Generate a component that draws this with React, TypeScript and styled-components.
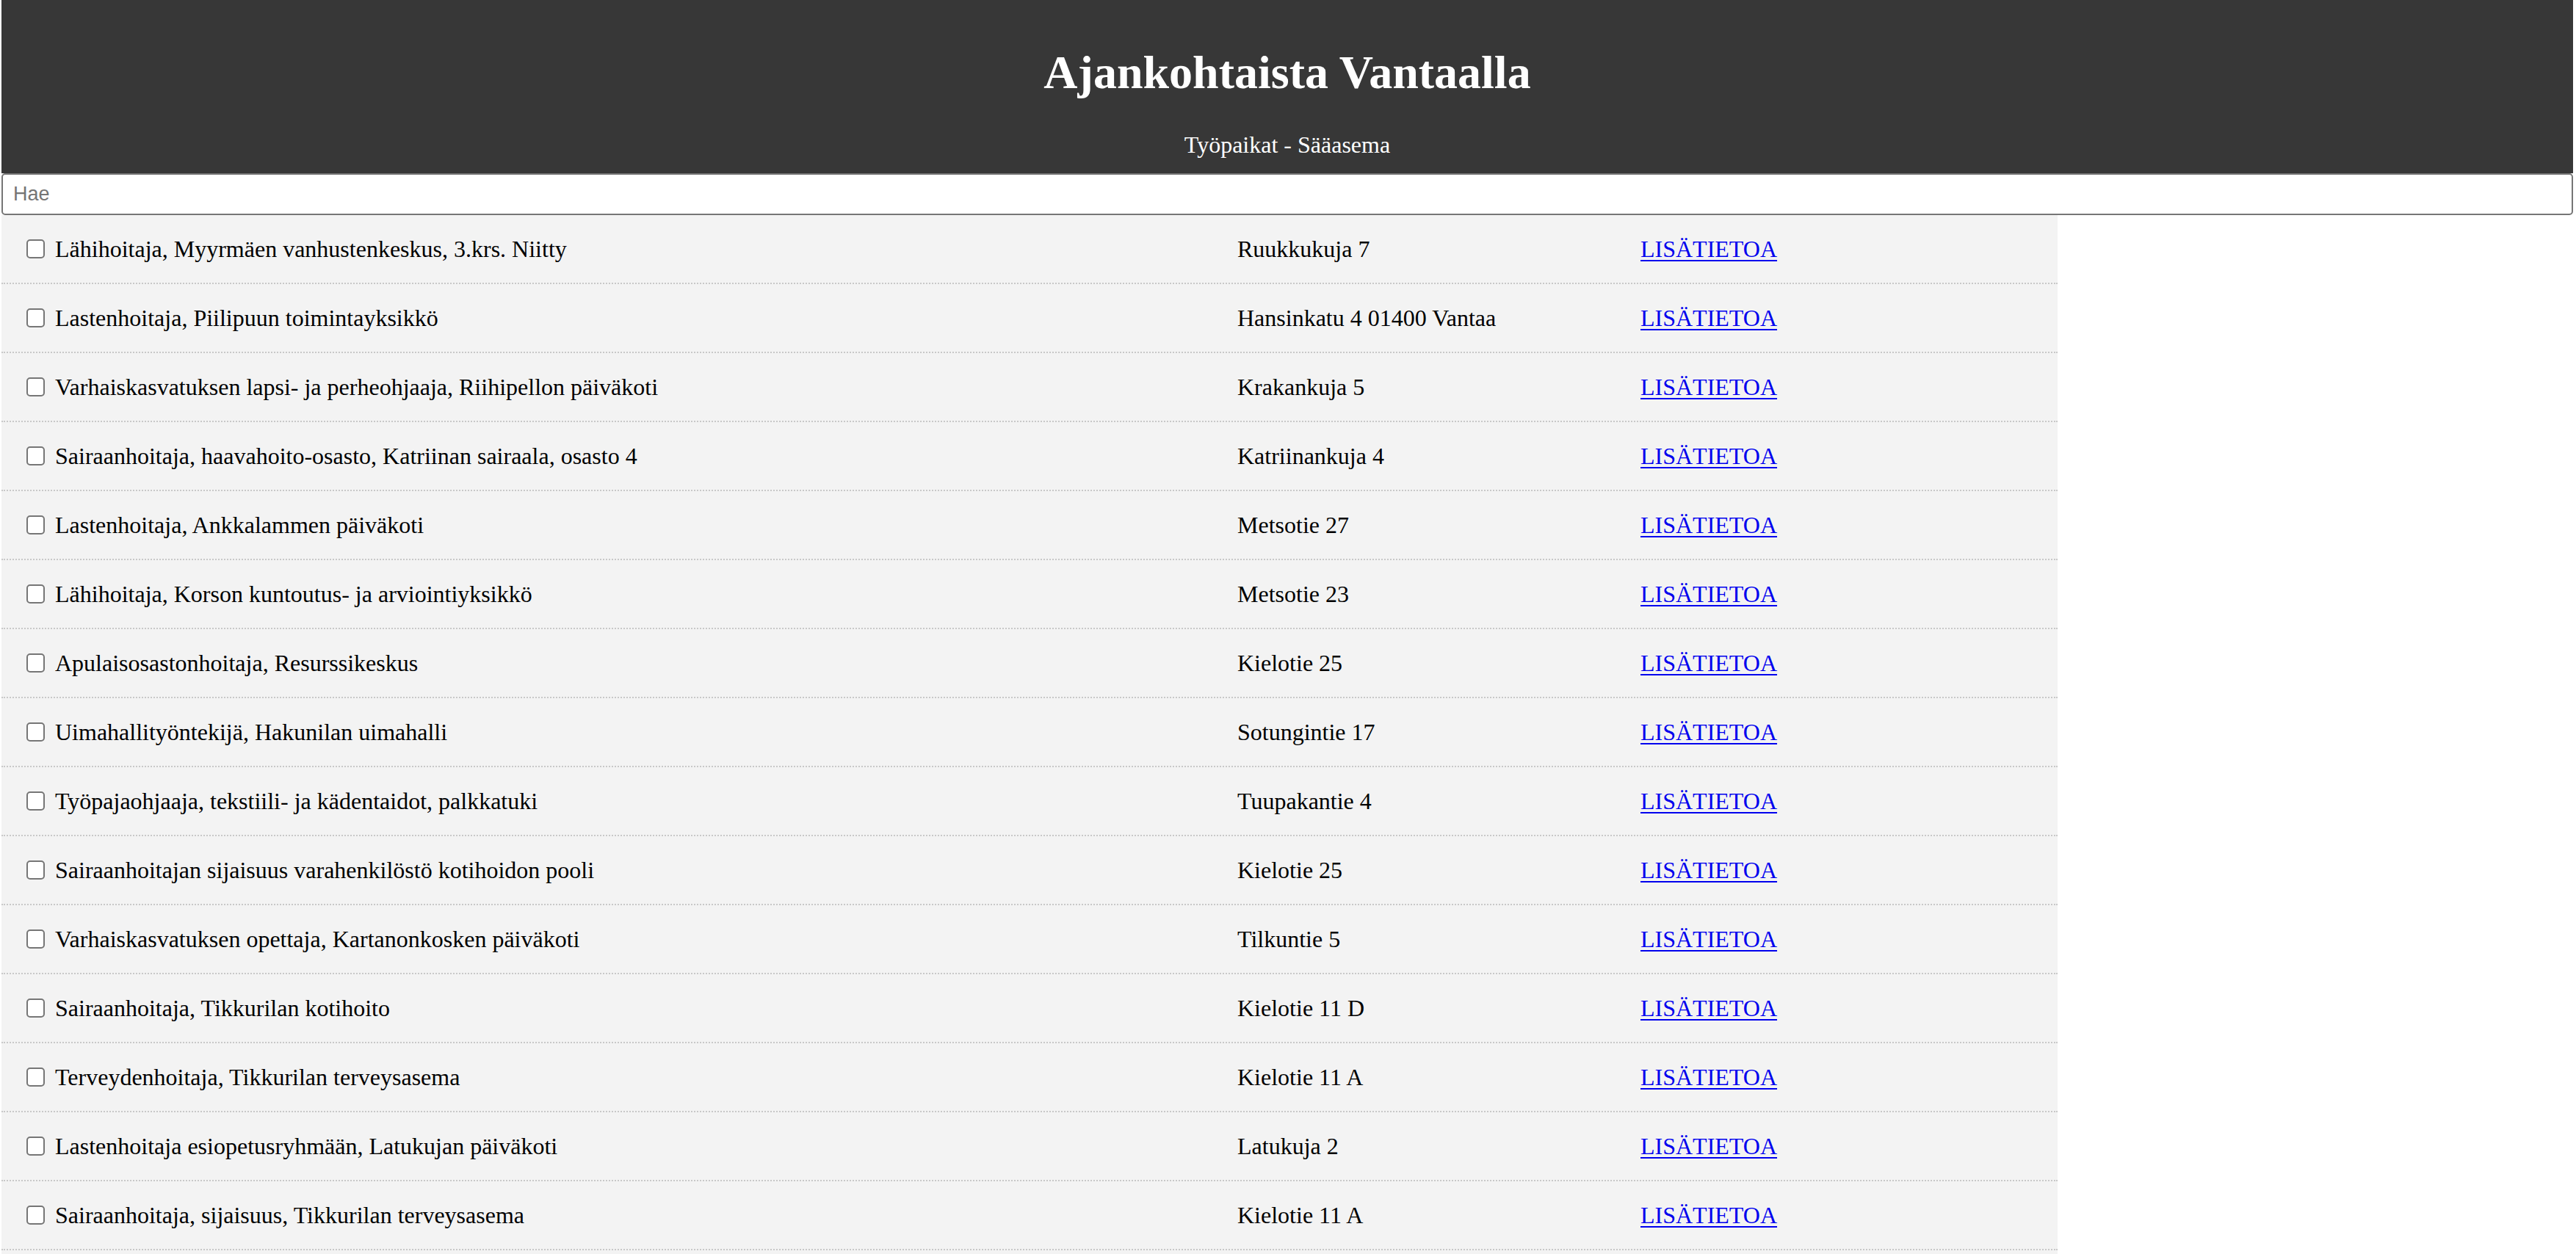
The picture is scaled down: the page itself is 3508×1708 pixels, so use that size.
import React from "react";
import styled, { createGlobalStyle } from "styled-components";

const GlobalStyle = createGlobalStyle`
  html, body {
    margin: 0;
    padding: 0;
    background: #ffffff;
    overflow: hidden;
  }
  body {
    font-family: "Liberation Serif", "Times New Roman", serif;
    font-size: 32px;
    color: #000000;
  }
`;

const Page = styled.div`
  width: 3502px;
  margin-left: 2px;
`;

const Header = styled.header`
  background: #373737;
  color: #ffffff;
  text-align: center;
  height: 236px;
  box-sizing: border-box;
  padding-top: 19px;
`;

const Title = styled.h1`
  font-family: "Liberation Serif", "Times New Roman", serif;
  font-size: 64px;
  font-weight: 700;
  margin: 43px 0;
  line-height: normal;
`;

const Nav = styled.nav`
  font-size: 32px;
  line-height: normal;
  display: flex;
  justify-content: center;
  gap: 0.25em;
`;

const NavItem = styled.span`
  color: #ffffff;
`;

const Search = styled.input`
  display: block;
  box-sizing: border-box;
  width: 100%;
  height: 57px;
  margin: 0;
  border: 2px solid #767676;
  border-radius: 5px;
  padding: 0 14px;
  font-family: "Liberation Sans", Arial, sans-serif;
  font-size: 27px;
  color: #000000;
  background: #ffffff;
  outline: none;
  &::placeholder {
    color: #757575;
  }
`;

const List = styled.div`
  width: 2800px;
  background: #f3f3f3;
  padding-bottom: 8px;
`;

const Row = styled.div`
  display: grid;
  grid-template-columns: 1683px 549px 1fr;
  align-items: center;
  height: 94px;
  box-sizing: border-box;
  border-bottom: 2px dotted #c8c8c8;
  line-height: normal;
`;

const TitleCell = styled.label`
  display: flex;
  align-items: center;
  gap: 14px;
  padding-left: 34px;
`;

const Check = styled.input`
  appearance: none;
  -webkit-appearance: none;
  width: 25px;
  height: 26px;
  margin: 0;
  box-sizing: border-box;
  border: 2px solid #767676;
  border-radius: 5px;
  background: #ffffff;
  flex: none;
`;

const Cell = styled.div``;

const InfoLink = styled.a`
  color: #0000ee;
  text-decoration: underline;
  text-decoration-thickness: 2px;
  text-underline-offset: 4px;
`;

const jobs: [string, string][] = [
  ["Lähihoitaja, Myyrmäen vanhustenkeskus, 3.krs. Niitty", "Ruukkukuja 7"],
  ["Lastenhoitaja, Piilipuun toimintayksikkö", "Hansinkatu 4 01400 Vantaa"],
  ["Varhaiskasvatuksen lapsi- ja perheohjaaja, Riihipellon päiväkoti", "Krakankuja 5"],
  ["Sairaanhoitaja, haavahoito-osasto, Katriinan sairaala, osasto 4", "Katriinankuja 4"],
  ["Lastenhoitaja, Ankkalammen päiväkoti", "Metsotie 27"],
  ["Lähihoitaja, Korson kuntoutus- ja arviointiyksikkö", "Metsotie 23"],
  ["Apulaisosastonhoitaja, Resurssikeskus", "Kielotie 25"],
  ["Uimahallityöntekijä, Hakunilan uimahalli", "Sotungintie 17"],
  ["Työpajaohjaaja, tekstiili- ja kädentaidot, palkkatuki", "Tuupakantie 4"],
  ["Sairaanhoitajan sijaisuus varahenkilöstö kotihoidon pooli", "Kielotie 25"],
  ["Varhaiskasvatuksen opettaja, Kartanonkosken päiväkoti", "Tilkuntie 5"],
  ["Sairaanhoitaja, Tikkurilan kotihoito", "Kielotie 11 D"],
  ["Terveydenhoitaja, Tikkurilan terveysasema", "Kielotie 11 A"],
  ["Lastenhoitaja esiopetusryhmään, Latukujan päiväkoti", "Latukuja 2"],
  ["Sairaanhoitaja, sijaisuus, Tikkurilan terveysasema", "Kielotie 11 A"],
];

export default function App() {
  return (
    <>
      <GlobalStyle />
      <Page>
        <Header>
          <Title>Ajankohtaista Vantaalla</Title>
          <Nav>
            <NavItem>Työpaikat</NavItem>
            <NavItem>-</NavItem>
            <NavItem>Sääasema</NavItem>
          </Nav>
        </Header>
        <Search type="text" placeholder="Hae" />
        <List>
          {jobs.map(([title, address], i) => (
            <Row key={i}>
              <TitleCell>
                <Check type="checkbox" />
                <span>{title}</span>
              </TitleCell>
              <Cell>{address}</Cell>
              <Cell>
                <InfoLink href="#">LISÄTIETOA</InfoLink>
              </Cell>
            </Row>
          ))}
        </List>
      </Page>
    </>
  );
}
